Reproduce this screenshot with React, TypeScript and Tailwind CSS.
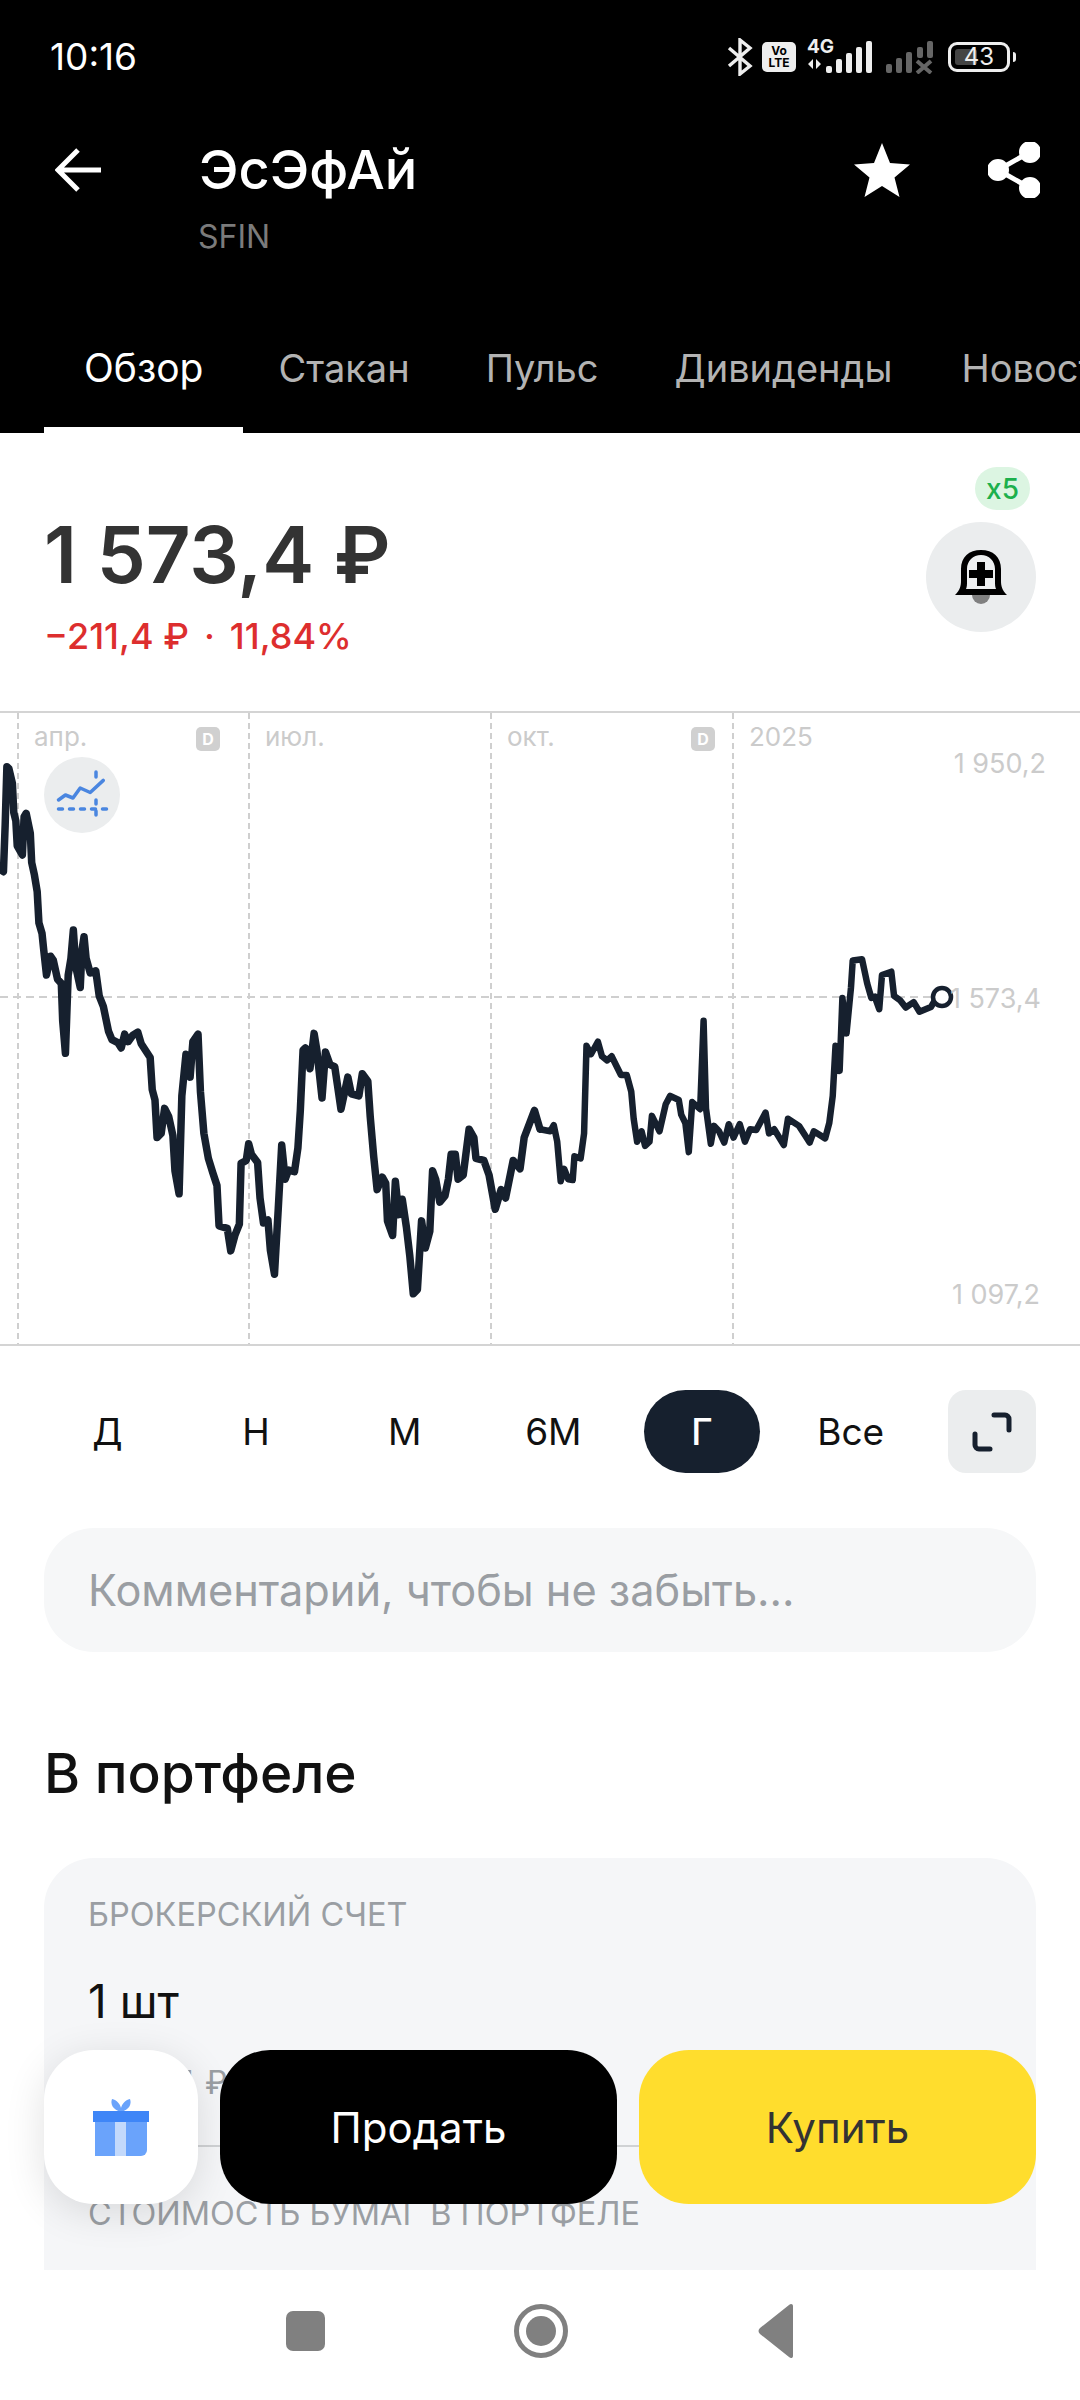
const FONT = "font-['Inter','Noto_Sans',sans-serif]";

const LINE_A =
  "0,405 10,412 15,300 20,160 26,165 36,200 40,270 46,290 50,350 65,372 70,280 76,272 88,320 92,390 100,420 108,460 113,535 122,560 127,600 135,660 147,615 155,625 167,670 178,680 182,770 190,848 198,660 206,620 213,552 220,640 233,690 238,600 244,568 250,620 262,655 278,650 288,710 300,735 315,795 325,815 342,822 352,835 362,802 372,820 385,805 400,797 410,825 436,858 442,935 450,960 456,1050 468,1040 478,980 490,1000 502,1045 508,1130 520,1185 528,950 540,850 552,905 560,820 575,802 582,940 592,1040 605,1100 618,1135 630,1165 636,1262 660,1268 670,1322 682,1285 695,1258 700,1112 715,1105 722,1065 730,1090 748,1110 755,1195 765,1255 778,1248 785,1320 797,1378 808,1220 818,1068 828,1150 838,1128 855,1132 865,1075 872,985 880,840 887,835 900,885 912,800 920,840 935,955 945,845 958,875 972,880 980,925 990,982 1010,905 1020,945 1042,950 1052,897 1068,915 1075,1000 1085,1095 1095,1175 1110,1145 1120,1160 1125,1250 1140,1285 1148,1155 1158,1235 1168,1198 1180,1265 1190,1335 1200,1425 1212,1415 1224,1250 1235,1315 1248,1275 1256,1130 1265,1150 1277,1205 1292,1190 1302,1150 1310,1090 1322,1090 1330,1150 1345,1140 1362,1030 1376,1050 1382,1100 1405,1105 1420,1140 1438,1222 1455,1175 1468,1195 1490,1105 1510,1125 1522,1050 1552,985 1568,1030";
const LINE_B =
  "0,1030 30,1035 40,1020 50,1060 60,1155 70,1125 82,1150 95,1152 100,1095 118,1100 128,1040 135,830 148,850 168,820 180,855 195,865 208,855 235,900 252,900 265,940 272,1005 282,1060 295,1035 305,1070 318,1060 325,998 347,1035 365,970 378,950 403,960 410,995 422,1015 432,1085 442,965 465,982 475,770 482,980 496,1065 505,1022 520,1035 535,1062 548,1018 562,1050 580,1018 595,1060 610,1030 628,1032 655,990 665,1040 680,1030 708,1068 720,1005 752,1022 770,1045 783,1062 795,1035 828,1052 840,1015 850,950 858,830 870,890 878,715 890,800 903,690 908,625 935,622 950,680 962,715 972,712 985,742 993,660 1020,652 1028,710 1045,720 1062,738 1085,725 1102,748 1135,737 1150,716";

function StatusIcons() {
  return (
    <div className="flex items-center pr-[64px]">
      <svg width="26" height="38" viewBox="0 0 26 38" fill="none" stroke="#eee" strokeWidth="3.4">
        <path d="M2 10l21 18-10 8V2l10 8L2 28" />
      </svg>
      <div className="ml-[9px] flex h-[30px] w-[34px] flex-col items-center justify-center rounded-[5px] bg-[#eee] text-[12px] leading-[12px] font-bold text-black">
        <span>Vo</span>
        <span>LTE</span>
      </div>
      <div className="relative ml-[11px] h-[36px] w-[66px]">
        <span className="absolute top-[-2px] left-0 text-[19px] leading-[20px] font-bold text-[#eee]">4G</span>
        <svg className="absolute inset-0" width="66" height="36" viewBox="0 0 66 36" fill="#eee">
          <path d="M6 20v10l-5-5zM9 20l5 5-5 5z" />
          <rect x="19" y="27" width="6" height="7" rx="2" />
          <rect x="29" y="20" width="6" height="14" rx="2" />
          <rect x="39" y="14" width="6" height="20" rx="2" />
          <rect x="49" y="8" width="6" height="26" rx="2" />
          <rect x="59" y="2" width="6" height="32" rx="2" />
        </svg>
      </div>
      <svg className="ml-[13px]" width="48" height="34" viewBox="0 0 48 34" fill="#666">
        <rect x="0" y="24" width="6" height="9" rx="2" />
        <rect x="10" y="18" width="6" height="15" rx="2" />
        <rect x="20" y="12" width="6" height="21" rx="2" />
        <rect x="31" y="7" width="6" height="11" rx="2" />
        <rect x="41" y="1" width="6" height="17" rx="2" />
        <path d="M31 21l14 12M45 21L31 33" stroke="#666" strokeWidth="4" fill="none" />
      </svg>
      <div className="relative ml-[14px] flex h-[30px] w-[62px] items-center justify-center rounded-[9px] border-[3px] border-[#eee] text-[24px] leading-none text-[#eee]">
        <div className="absolute top-[4px] bottom-[4px] left-[4px] w-[22px] rounded-[3px] bg-[#444]" />
        <span className="relative">43</span>
      </div>
      <div className="ml-[3px] h-[10px] w-[3px] rounded-r-full bg-[#eee]" />
    </div>
  );
}

function Header() {
  const tabs = ["Стакан", "Пульс", "Дивиденды"];
  return (
    <header className="flex h-[433px] flex-col bg-black text-white">
      <div className="flex h-[114px] items-center justify-between">
        <span className="pl-[50px] text-[37px]">10:16</span>
        <StatusIcons />
      </div>
      <div className="flex h-[112px] items-center justify-between pl-[55px] pr-[40px]">
        <div className="flex items-center">
          <svg width="46" height="46" viewBox="0 0 46 46" fill="none" stroke="white" strokeWidth="5">
            <path d="M46 23H4M23 3L3 23l20 20" />
          </svg>
          <span className="ml-[98px] text-[54px] leading-none font-medium">ЭсЭфАй</span>
        </div>
        <div className="flex items-center gap-[78px]">
          <svg width="56" height="54" viewBox="0 0 56 54" fill="white">
            <path d="M28 0l8 20 20 1.500-15.500 13 5 19.500L28 43 10.500 54l5-19.500L0 21.500 20 20z" />
          </svg>
          <svg width="52" height="56" viewBox="0 0 52 56" fill="none" stroke="white" strokeWidth="5">
            <path d="M42 10L10 28l32 18" />
            <circle cx="42" cy="10" r="8.500" fill="white" />
            <circle cx="10" cy="28" r="8.500" fill="white" />
            <circle cx="42" cy="46" r="8.500" fill="white" />
          </svg>
        </div>
      </div>
      <div className="mt-[-5px] pl-[198px] text-[32px] leading-none text-[#7b7b7b]">SFIN</div>
      <div className="mt-auto flex overflow-hidden pl-[44px] text-[38px] leading-[52px] whitespace-nowrap">
        <div className="mr-[-3px] border-b-[6px] border-white px-[40px] pb-[33px] text-[39px] text-white">Обзор</div>
        {tabs.map((tab) => (
          <div key={tab} className="border-b-[6px] border-transparent px-[38px] pb-[33px] text-[#b3b3b3]">
            {tab}
          </div>
        ))}
        <div className="ml-[-7px] border-b-[6px] border-transparent px-[38px] pb-[33px] text-[#b3b3b3]">Новости</div>
      </div>
    </header>
  );
}

function PriceBlock() {
  return (
    <section className="relative flex h-[278px] justify-between px-[44px]">
      <div className="pt-[70px]">
        <div className="text-[78px] leading-[104px] font-semibold text-[#333]">1 573,4 ₽</div>
        <div className="mt-[5px] flex gap-[15px] text-[36px] leading-[48px] font-medium text-[#dd2e2e]">
          <span>−211,4 ₽</span>
          <span>·</span>
          <span>11,84%</span>
        </div>
      </div>
      <div className="mt-[89px] flex h-[110px] w-[110px] items-center justify-center rounded-full bg-[#ebedee]">
        <svg width="54" height="56" viewBox="0 0 54 56">
          <circle cx="27" cy="46" r="9" fill="#808080" />
          <path d="M1 46c5-5 6-9 6-14V20C7 8 15 1 27 1s20 7 20 19v12c0 5 1 9 6 14z" fill="#000" />
          <path d="M12 40c1-2 1-5 1-8V20c0-8 6-14 14-14s14 6 14 14v12c0 3 0 6 1 8z" fill="#eef0f1" />
          <path d="M23 13h8v8h8v8h-8v8h-8v-8h-8v-8h8z" fill="#000" />
        </svg>
      </div>
      <div className="absolute top-[34px] right-[50px] flex h-[43px] w-[55px] items-center justify-center rounded-full bg-[#dcf5e2] text-[28px] font-medium text-[#1cb04c]">
        x5
      </div>
    </section>
  );
}

function ChartBadge({ className }: { className: string }) {
  return (
    <div
      className={`absolute top-[14px] flex h-[24px] w-[24px] items-center justify-center rounded-[5px] bg-[#d0d0d0] text-[16px] leading-none font-bold text-white ${className}`}
    >
      D
    </div>
  );
}

function Chart() {
  const verticals = [18, 249, 491, 733];
  return (
    <section className="relative h-[635px] border-y-2 border-[#d4d4d4] text-[26px] leading-none text-[#cbcbcb]">
      <svg className="absolute inset-0" width="1080" height="631" viewBox="0 713 1080 631" fill="none">
        {verticals.map((x) => (
          <line key={x} x1={x} y1="713" x2={x} y2="1344" stroke="#cfcfcf" strokeWidth="2" strokeDasharray="6 4" />
        ))}
        <line x1="0" y1="997" x2="950" y2="997" stroke="#cfcfcf" strokeWidth="2" strokeDasharray="8 5" />
        <g transform="translate(0 700) scale(0.3444 0.4167)">
          <polyline points={LINE_A} stroke="#16202e" strokeWidth="7.500" strokeLinejoin="round" strokeLinecap="round" vectorEffect="non-scaling-stroke" />
        </g>
        <g transform="translate(540 700) scale(0.3444 0.4167)">
          <polyline points={LINE_B} stroke="#16202e" strokeWidth="6.500" strokeLinejoin="round" strokeLinecap="round" vectorEffect="non-scaling-stroke" />
        </g>
        <circle cx="942" cy="997" r="9" fill="white" stroke="#16202e" strokeWidth="4.500" />
      </svg>
      <span className="absolute top-[11px] left-[34px]">апр.</span>
      <ChartBadge className="left-[196px]" />
      <span className="absolute top-[11px] left-[265px]">июл.</span>
      <span className="absolute top-[11px] left-[507px]">окт.</span>
      <ChartBadge className="left-[691px]" />
      <span className="absolute top-[11px] left-[749px]">2025</span>
      <span className="absolute top-[37px] right-[34px] text-[27px]">1 950,2</span>
      <span className="absolute top-[272px] right-[39px] text-[27px]">1 573,4</span>
      <span className="absolute top-[568px] right-[40px] text-[27px]">1 097,2</span>
      <div className="absolute top-[44px] left-[44px] flex h-[76px] w-[76px] items-center justify-center rounded-full bg-[#ebedee]">
        <svg width="76" height="76" viewBox="0 0 76 76" fill="none" stroke="#4a86e0" strokeWidth="3.500" strokeLinecap="round" strokeLinejoin="round">
          <polyline points="14.500,43 21.400,38 29,41 36.200,31 46.200,35.500 59.300,23.400" />
          <line x1="14.500" y1="52" x2="62.700" y2="52" strokeDasharray="4 7" />
          <line x1="52" y1="15" x2="52" y2="20" />
          <line x1="52" y1="43" x2="52" y2="60" strokeDasharray="4 7" />
        </svg>
      </div>
    </section>
  );
}

function PeriodRow() {
  const periods = ["Д", "Н", "М", "6М", "Г", "Все"];
  return (
    <div className="mt-[44px] flex h-[83px] items-center pl-[33px] pr-[44px]">
      <div className="grid flex-1 grid-cols-6">
        {periods.map((p) =>
          p === "Г" ? (
            <div key={p} className="mx-auto flex h-[83px] w-[116px] items-center justify-center rounded-[42px] bg-[#16202e] text-[37px] font-medium text-white">
              {p}
            </div>
          ) : (
            <div key={p} className="flex h-[83px] items-center justify-center text-[37px] text-[#111]">
              {p}
            </div>
          ),
        )}
      </div>
      <div className="ml-[23px] flex h-[83px] w-[88px] items-center justify-center rounded-[18px] bg-[#ebedee]">
        <svg width="40" height="40" viewBox="0 0 40 40" fill="none" stroke="#16202e" strokeWidth="5" strokeLinecap="round" strokeLinejoin="round">
          <path d="M22 3h11a4 4 0 0 1 4 4v11" />
          <path d="M3 22v11a4 4 0 0 0 4 4h11" />
        </svg>
      </div>
    </div>
  );
}

function Portfolio() {
  return (
    <>
      <div className="mx-[44px] mt-[55px] flex h-[124px] items-center rounded-[50px] bg-[#f6f7f8] pl-[44px] text-[43.300px] text-[#9a9ea3]">
        Комментарий, чтобы не забыть...
      </div>
      <h2 className="mt-[90px] px-[44px] text-[55px] leading-[62px] font-medium text-[#111]">В портфеле</h2>
      <div className="mx-[44px] mt-[54px] h-[480px] rounded-t-[50px] bg-[#f5f6f8] px-[44px] pt-[38px]">
        <div className="text-[32.500px] leading-[38px] text-[#9a9ea3]">БРОКЕРСКИЙ СЧЕТ</div>
        <div className="mt-[43px] text-[46px] leading-[48px] text-[#111]">1 шт</div>
        <div className="mt-[38px] text-[32px] leading-[40px] text-[#9a9ea3]">1 573,4 ₽</div>
        <div className="mt-[42px] -mr-[44px] h-[2px] bg-[#d0d2d4]" />
        <div className="mt-[48px] text-[32.400px] leading-[38px] text-[#9a9ea3]">СТОИМОСТЬ БУМАГ В ПОРТФЕЛЕ</div>
      </div>
    </>
  );
}

function ActionBar() {
  return (
    <div className="absolute top-[2050px] right-[44px] left-[44px] flex h-[154px] gap-[22px] text-[42px]">
      <div className="flex w-[154px] items-center justify-center rounded-[50px] bg-white shadow-[0_8px_40px_rgba(0,0,0,0.12)]">
        <svg width="56" height="58" viewBox="0 0 56 58">
          <path d="M28 14C20 12 17 6 19 1c5 1 8 5 9 9 1-4 4-8 9-9 2 5-1 11-9 13z" fill="#6aa3fb" />
          <path d="M2 22h52v30a6 6 0 0 1-6 6H2z" fill="#6aa3fb" />
          <rect x="22" y="22" width="11" height="36" fill="#c3d9fb" />
          <rect x="0" y="13" width="56" height="11" fill="#3f86f7" />
        </svg>
      </div>
      <div className="flex flex-1 items-center justify-center rounded-[50px] bg-black text-white">Продать</div>
      <div className="flex flex-1 items-center justify-center rounded-[50px] bg-[#ffdd2d] text-[#333]">Купить</div>
    </div>
  );
}

function NavBar() {
  return (
    <div className="relative flex h-[130px] shrink-0 items-center justify-center gap-[189px] bg-white pb-[8px]">
      <div className="h-[40px] w-[39px] rounded-[7px] bg-[#808080]" />
      <svg width="54" height="54" viewBox="0 0 54 54">
        <circle cx="27" cy="27" r="24.500" fill="none" stroke="#808080" strokeWidth="5" />
        <circle cx="27" cy="27" r="15" fill="#808080" />
      </svg>
      <svg width="38" height="56" viewBox="0 0 38 56">
        <path d="M36 3v50c0 2-2 3-4 1L3 31c-2-2-2-4 0-6L32 2c2-2 4-1 4 1z" fill="#808080" />
      </svg>
    </div>
  );
}

export default function App() {
  return (
    <div className={`relative flex h-[2400px] w-[1080px] flex-col overflow-hidden bg-white ${FONT}`}>
      <Header />
      <main className="min-h-0 flex-1 overflow-hidden">
        <PriceBlock />
        <Chart />
        <PeriodRow />
        <Portfolio />
      </main>
      <NavBar />
      <ActionBar />
    </div>
  );
}
